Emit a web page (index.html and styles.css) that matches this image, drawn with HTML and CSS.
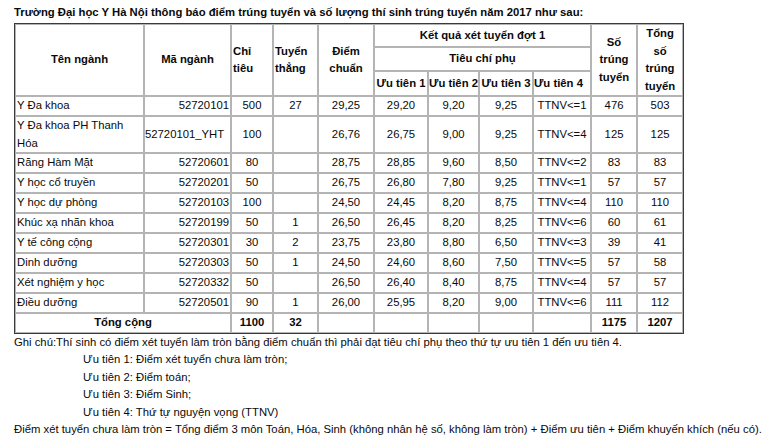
FILE: index.html
```html
<!DOCTYPE html>
<html lang="vi">
<head>
<meta charset="utf-8">
<link rel="stylesheet" href="styles.css">
</head>
<body>
<div class="page">
<p class="title">Trường Đại học Y Hà Nội thông báo điểm trúng tuyển và số lượng thí sinh trúng tuyển năm 2017 như sau:</p>
<table class="tbl">
<colgroup>
<col class="c1"><col class="c2"><col class="c3"><col class="c4"><col class="c5"><col class="c6"><col class="c7"><col class="c8"><col class="c9"><col class="c10"><col class="c11">
</colgroup>
<thead>
<tr class="h1">
<th rowspan="3">Tên ngành</th>
<th rowspan="3">Mã ngành</th>
<th rowspan="3" class="left">Chỉ<br>tiêu</th>
<th rowspan="3" class="left">Tuyển<br>thẳng</th>
<th rowspan="3">Điểm<br>chuẩn</th>
<th colspan="4">Kết quả xét tuyển đợt 1</th>
<th rowspan="3">Số<br>trúng<br>tuyển</th>
<th rowspan="3">Tổng<br>số<br>trúng<br>tuyển</th>
</tr>
<tr class="h2"><th colspan="4">Tiêu chí phụ</th></tr>
<tr class="h3"><th>Ưu tiên 1</th><th>Ưu tiên 2</th><th>Ưu tiên 3</th><th class="left">Ưu tiên 4</th></tr>
</thead>
<tbody>
<tr><td class="left">Y Đa khoa</td><td class="right">52720101</td><td>500</td><td>27</td><td>29,25</td><td>29,20</td><td>9,20</td><td>9,25</td><td>TTNV&lt;=1</td><td>476</td><td>503</td></tr>
<tr><td class="left">Y Đa khoa PH Thanh Hóa</td><td class="code">52720101_YHT</td><td>100</td><td></td><td>26,76</td><td>26,75</td><td>9,00</td><td>9,25</td><td>TTNV&lt;=4</td><td>125</td><td>125</td></tr>
<tr><td class="left">Răng Hàm Mặt</td><td class="right">52720601</td><td>80</td><td></td><td>28,75</td><td>28,85</td><td>9,60</td><td>8,50</td><td>TTNV&lt;=2</td><td>83</td><td>83</td></tr>
<tr><td class="left">Y học cổ truyền</td><td class="right">52720201</td><td>50</td><td></td><td>26,75</td><td>26,80</td><td>7,80</td><td>9,25</td><td>TTNV&lt;=1</td><td>57</td><td>57</td></tr>
<tr><td class="left">Y học dự phòng</td><td class="right">52720103</td><td>100</td><td></td><td>24,50</td><td>24,45</td><td>8,20</td><td>8,75</td><td>TTNV&lt;=4</td><td>110</td><td>110</td></tr>
<tr><td class="left">Khúc xạ nhãn khoa</td><td class="right">52720199</td><td>50</td><td>1</td><td>26,50</td><td>26,45</td><td>8,20</td><td>8,25</td><td>TTNV&lt;=6</td><td>60</td><td>61</td></tr>
<tr><td class="left">Y tế công cộng</td><td class="right">52720301</td><td>30</td><td>2</td><td>23,75</td><td>23,80</td><td>8,80</td><td>6,50</td><td>TTNV&lt;=3</td><td>39</td><td>41</td></tr>
<tr><td class="left">Dinh dưỡng</td><td class="right">52720303</td><td>50</td><td>1</td><td>24,50</td><td>24,60</td><td>8,60</td><td>7,50</td><td>TTNV&lt;=5</td><td>57</td><td>58</td></tr>
<tr><td class="left">Xét nghiệm y học</td><td class="right">52720332</td><td>50</td><td></td><td>26,50</td><td>26,40</td><td>8,40</td><td>8,75</td><td>TTNV&lt;=4</td><td>57</td><td>57</td></tr>
<tr><td class="left">Điều dưỡng</td><td class="right">52720501</td><td>90</td><td>1</td><td>26,00</td><td>25,95</td><td>8,20</td><td>9,00</td><td>TTNV&lt;=6</td><td>111</td><td>112</td></tr>
<tr class="total"><td colspan="2">Tổng cộng</td><td>1100</td><td>32</td><td></td><td></td><td></td><td></td><td></td><td>1175</td><td>1207</td></tr>
</tbody>
</table>
<div class="notes">
<p>Ghi chú:Thí sinh có điểm xét tuyển làm tròn bằng điểm chuẩn thì phải đạt tiêu chí phụ theo thứ tự ưu tiên 1 đến ưu tiên 4.</p>
<p class="ind">Ưu tiên 1: Điểm xét tuyển chưa làm tròn;</p>
<p class="ind">Ưu tiên 2: Điểm toán;</p>
<p class="ind">Ưu tiên 3: Điểm Sinh;</p>
<p class="ind">Ưu tiên 4: Thứ tự nguyện vọng (TTNV)</p>
<p>Điểm xét tuyển chưa làm tròn = Tổng điểm 3 môn Toán, Hóa, Sinh (không nhân hệ số, không làm tròn) + Điểm ưu tiên + Điểm khuyến khích (nếu có).</p>
</div>
</div>
</body>
</html>
```

FILE: styles.css
```css
html, body {
  margin: 0;
  padding: 0;
  background: #fff;
}
body {
  font-family: "Liberation Sans", Arial, sans-serif;
  font-size: 11.3px;
  color: #0a0a0a;
}
.page {
  padding: 3px 0 0 14px;
}
.title {
  margin: 0;
  font-weight: bold;
  line-height: 18px;
  height: 20px;
}
.tbl {
  border-collapse: separate;
  border-spacing: 0;
  border: 1px solid #3a3a3a;
  table-layout: fixed;
  width: 668px;
}
.c1 { width: 129px; }
.c2 { width: 87px; }
.c3 { width: 42px; }
.c4 { width: 45px; }
.c5 { width: 56px; }
.c6 { width: 54px; }
.c7 { width: 51px; }
.c8 { width: 54px; }
.c9 { width: 58px; }
.c10 { width: 46px; }
.c11 { width: 46px; }
.tbl th, .tbl td {
  border: 1px solid #b4b4b4;
  padding: 0 1px;
  line-height: 17.5px;
  text-align: center;
  vertical-align: middle;
  box-sizing: border-box;
  overflow: hidden;
}
.tbl th {
  font-weight: bold;
}
.tbl .left { text-align: left; }
.tbl .right { text-align: right; }
.tbl td.code { text-align: left; padding: 0; white-space: nowrap; }
.h1 th { height: 23px; }
.h2 th { height: 24px; }
.h3 th { height: 25px; white-space: nowrap; padding: 0; }
.tbl tbody td { height: 20px; }
.total td { font-weight: bold; }
.notes p {
  margin: 0;
  line-height: 17.4px;
}
.notes p.ind {
  padding-left: 69px;
}
```
